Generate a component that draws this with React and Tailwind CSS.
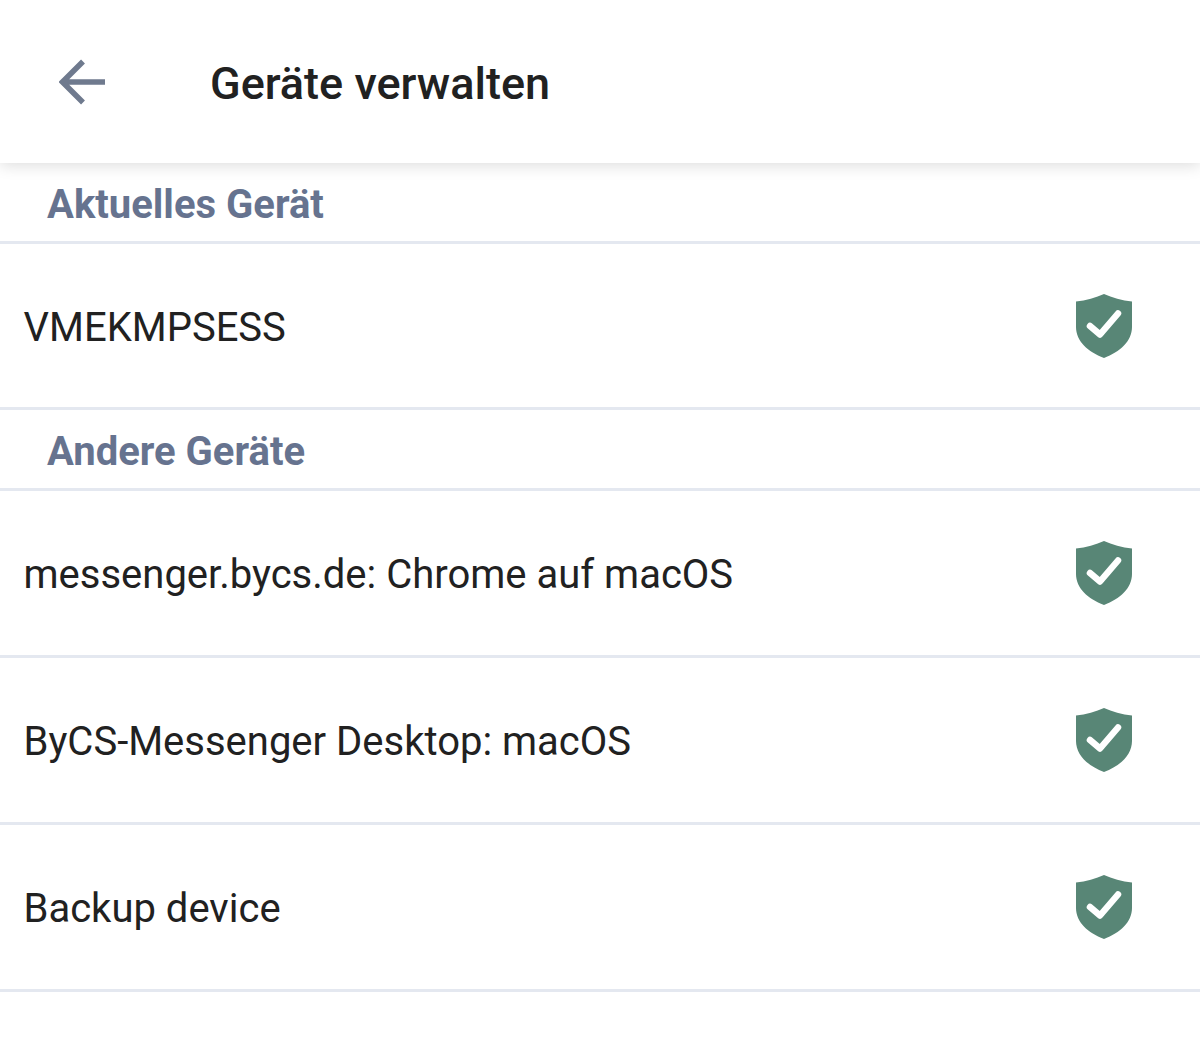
const otherDevices = [
  'messenger.bycs.de: Chrome auf macOS',
  'ByCS-Messenger Desktop: macOS',
  'Backup device',
];

function ShieldCheck() {
  return (
    <svg width="56" height="64" viewBox="0 0 56 64" className="shrink-0">
      <path
        d="M28 0 C36 3.5 46 6.5 56 7.5 L56 33 C56 47 44 58 28 64 C12 58 0 47 0 33 L0 7.5 C10 6.5 20 3.5 28 0 Z"
        fill="#588676"
      />
      <path
        d="M14 32 L24 40.5 L42 19.5"
        fill="none"
        stroke="#ffffff"
        strokeWidth="6.5"
        strokeLinecap="round"
        strokeLinejoin="round"
      />
    </svg>
  );
}

function SectionTitle({ children }) {
  return (
    <div className="h-[81px] pl-[47px] pt-1.5 flex items-center border-b-[3px] border-[#e4e8f0] text-[40px] font-bold text-[#66738f]">
      {children}
    </div>
  );
}

function DeviceRow({ name, height = 'h-[167px]' }) {
  return (
    <div className={`${height} pl-[23.5px] pr-[68px] flex items-center justify-between border-b-[3px] border-[#e4e8f0] text-[40px] text-[#212121]`}>
      <span className="pt-1">{name}</span>
      <ShieldCheck />
    </div>
  );
}

export default function App() {
  return (
    <div className="w-[1200px] h-[1043px] bg-white overflow-hidden font-['Roboto',sans-serif]">
      <div className="relative h-[163px] flex items-center bg-white shadow-[0_3px_14px_rgba(0,0,0,0.13)]">
        <svg width="50" height="50" viewBox="0 0 50 50" className="ml-[59px]">
          <path
            d="M46 25 L3.5 25 M24 4.5 L3.5 25 L24 45.5"
            fill="none"
            stroke="#6f7a8e"
            strokeWidth="5.5"
          />
        </svg>
        <h1 className="ml-[101px] pt-1 text-[45px] font-medium text-[#212121]">Geräte verwalten</h1>
      </div>
      <SectionTitle>Aktuelles Gerät</SectionTitle>
      <DeviceRow name="VMEKMPSESS" height="h-[166px]" />
      <SectionTitle>Andere Geräte</SectionTitle>
      {otherDevices.map((name) => (
        <DeviceRow key={name} name={name} />
      ))}
    </div>
  );
}
